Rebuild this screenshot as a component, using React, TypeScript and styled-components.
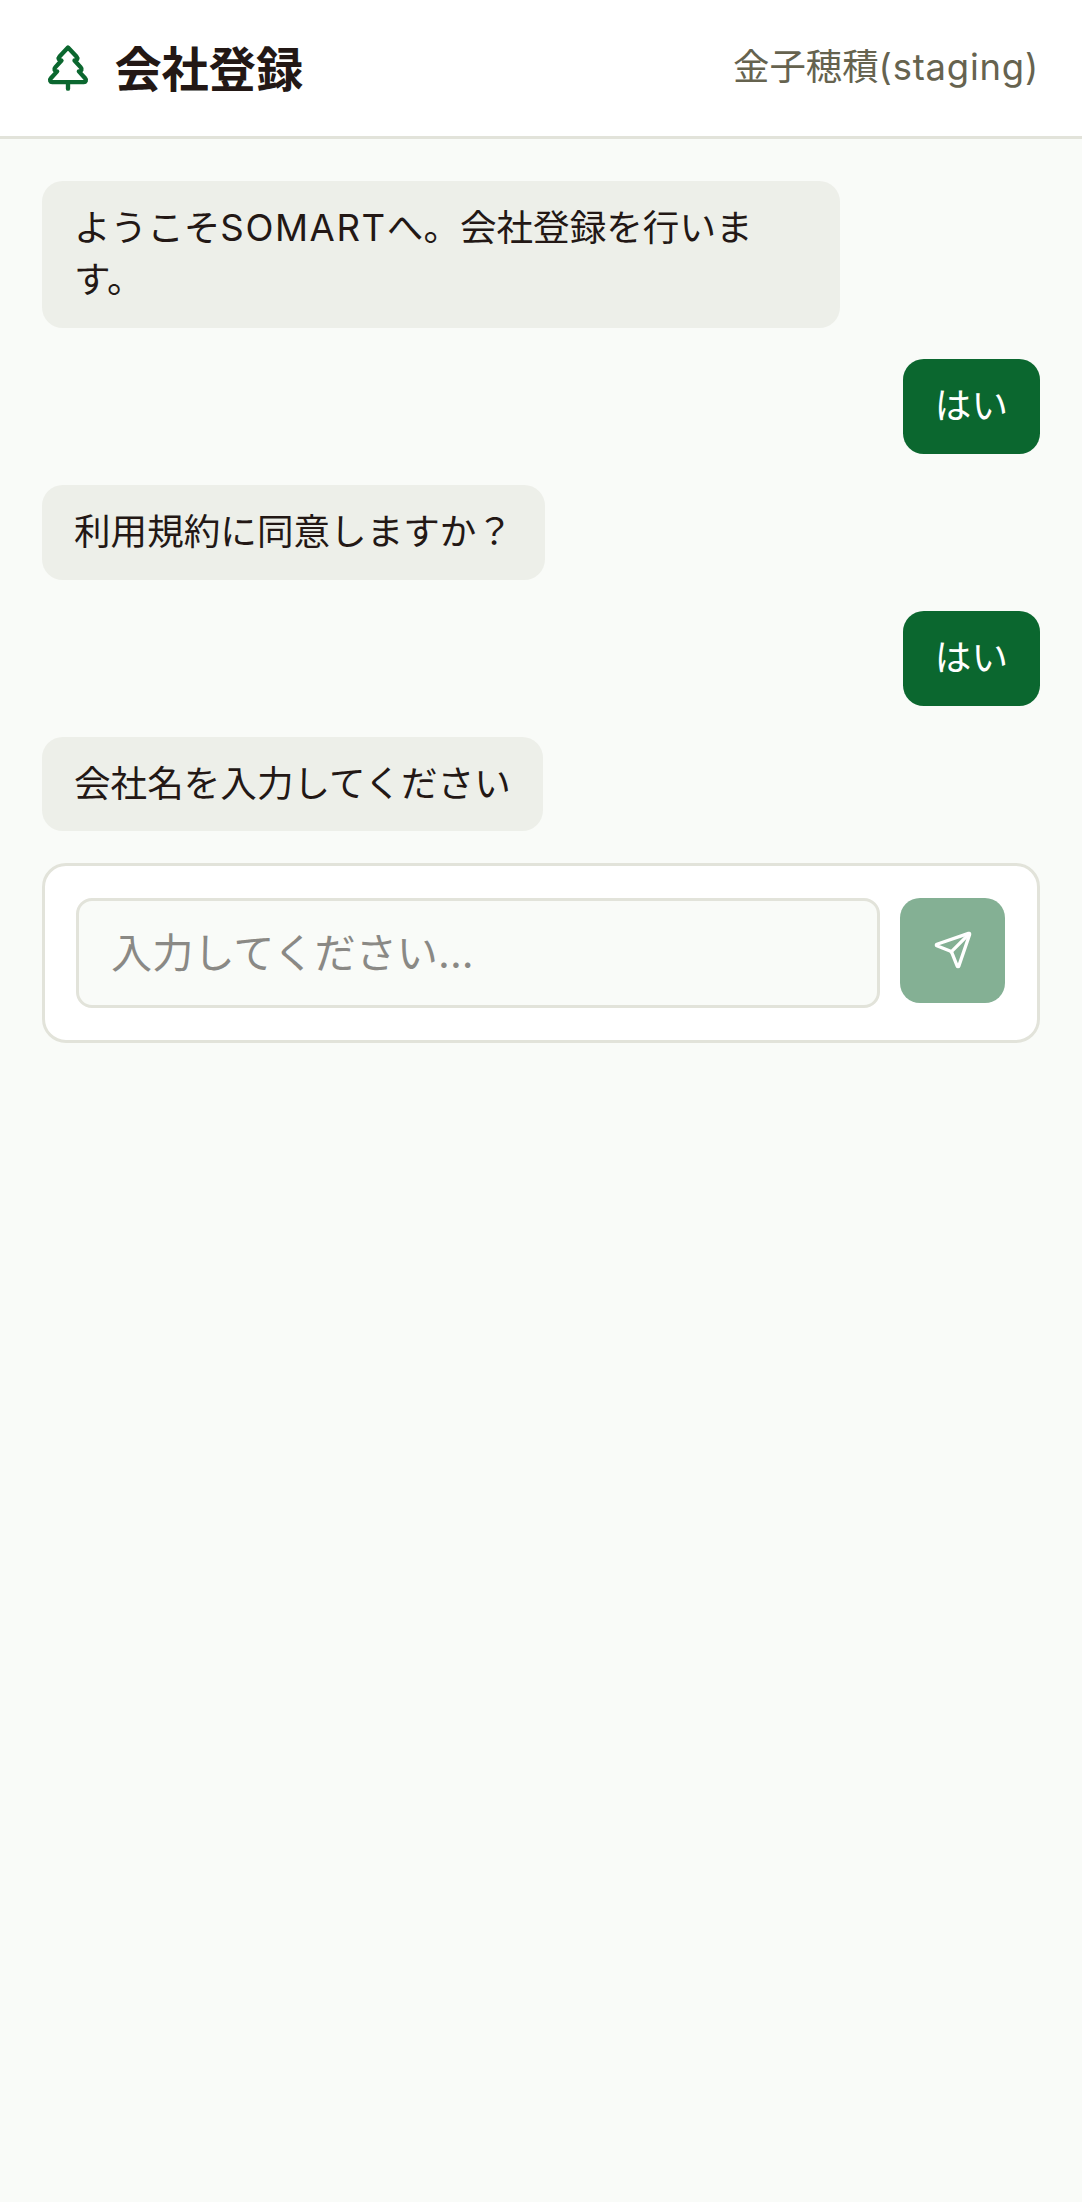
import React from 'react';
import styled, { createGlobalStyle } from 'styled-components';
import { Send, TreePine } from 'lucide-react';

const GlobalStyle = createGlobalStyle`
  html, body {
    margin: 0;
    padding: 0;
    background: #f9fbf8;
  }
  * {
    box-sizing: border-box;
  }
`;

const fontStack = `Inter, "Noto Sans CJK JP", sans-serif`;

const Page = styled.div`
  min-height: 2202px;
  background: #f9fbf8;
  color: #231815;
  font-family: ${fontStack};
`;

const Header = styled.header`
  display: flex;
  align-items: center;
  justify-content: space-between;
  height: 139px;
  padding: 0 43px 2px 41.6px;
  background: #fff;
  border-bottom: 3px solid #e2e3da;
`;

const Brand = styled.div`
  display: flex;
  align-items: center;
  gap: 20.8px;
  color: #0b672f;
`;

const Title = styled.h1`
  margin: 0;
  padding-top: 6px;
  color: #231815;
  font-size: 47.2px;
  font-weight: 700;
  line-height: 1;
`;

const UserName = styled.span`
  padding-bottom: 6px;
  color: #66634f;
  font-size: 36.4px;
`;

const Latin = styled.span<{ $tracking: number }>`
  letter-spacing: ${(p) => p.$tracking}px;
`;

const Thread = styled.main`
  display: flex;
  flex-direction: column;
  gap: 31.5px;
  padding: 42px 42px 0;
`;

const Bubble = styled.div<{ $mine?: boolean }>`
  align-self: ${(p) => (p.$mine ? 'flex-end' : 'flex-start')};
  max-width: 80%;
  padding: 21px 32px;
  border-radius: 20.8px;
  background: ${(p) => (p.$mine ? '#0b672f' : '#edefe9')};
  color: ${(p) => (p.$mine ? '#fff' : '#231815')};
  font-size: 36.6px;
  line-height: 52.4px;
`;

const Composer = styled.form`
  display: flex;
  align-items: flex-start;
  gap: 20px;
  padding: 32px 32px 32px 31px;
  background: #fff;
  border: 3px solid #e2e3da;
  border-radius: 24px;
`;

const Field = styled.input`
  flex: 1;
  min-width: 0;
  height: 110px;
  padding: 0 32px;
  border: 3px solid #e2e3da;
  border-radius: 16px;
  background: #f9fbf8;
  font-family: ${fontStack};
  font-size: 41.2px;
  outline: none;

  &::placeholder {
    color: #8a8985;
    opacity: 1;
  }
`;

const SendButton = styled.button`
  display: flex;
  align-items: center;
  justify-content: center;
  flex: none;
  width: 105px;
  height: 105px;
  padding: 0;
  border: none;
  border-radius: 20px;
  background: #84b094;
  color: #fff;
`;

const App: React.FC = () => (
  <Page>
    <GlobalStyle />
    <Header>
      <Brand>
        <TreePine size={52} strokeWidth={2} />
        <Title>会社登録</Title>
      </Brand>
      <UserName>
        金子穂積<Latin $tracking={0.8}>(staging)</Latin>
      </UserName>
    </Header>
    <Thread>
      <Bubble>
        ようこそ<Latin $tracking={1.6}>SOMART</Latin>へ。会社登録を行います。
      </Bubble>
      <Bubble $mine>はい</Bubble>
      <Bubble>利用規約に同意しますか？</Bubble>
      <Bubble $mine>はい</Bubble>
      <Bubble>会社名を入力してください</Bubble>
      <Composer>
        <Field placeholder="入力してください..." />
        <SendButton type="button" aria-label="送信">
          <Send size={40} strokeWidth={2} />
        </SendButton>
      </Composer>
    </Thread>
  </Page>
);

export default App;
